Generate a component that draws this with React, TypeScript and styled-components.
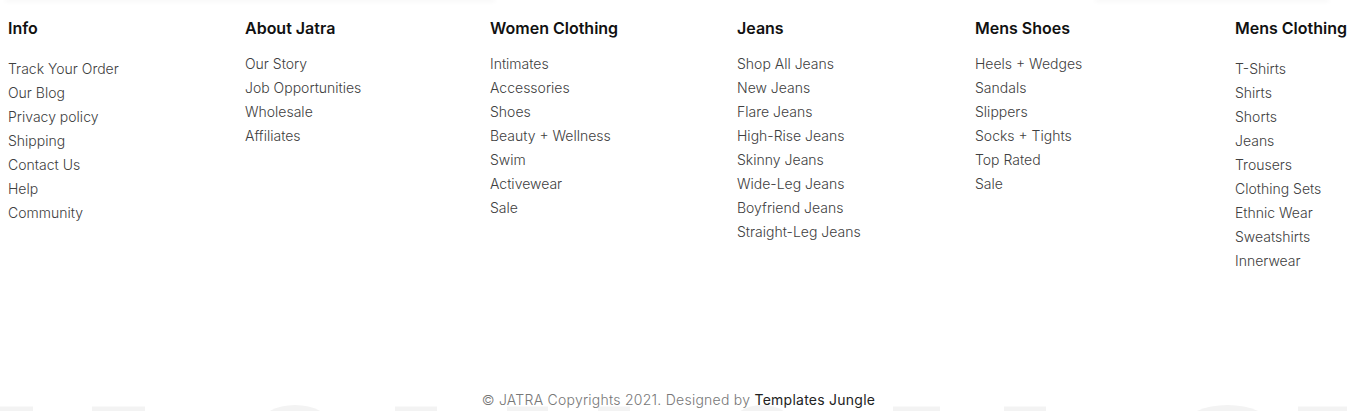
import React from "react";
import styled, { createGlobalStyle } from "styled-components";

const GlobalStyle = createGlobalStyle`
  html, body { margin: 0; padding: 0; background: #ffffff; }
  body { font-family: Inter, "Noto Sans", "Liberation Sans", sans-serif; overflow: hidden; }
`;

const Page = styled.div`
  height: 411px;
  display: flex;
  flex-direction: column;
  overflow: hidden;
`;

const TopEdge = styled.div`
  display: flex;
  height: 0;
`;

const EdgeCard = styled.div<{ $offset: number; $width: number }>`
  margin-left: ${(p) => p.$offset}px;
  width: ${(p) => p.$width}px;
  height: 0;
  box-shadow: 0 0 5px 1px rgba(0, 0, 0, 0.07);
`;

const Columns = styled.div`
  display: grid;
  grid-template-columns: 237px 245px 247px 238px 260px auto;
  padding: 18px 0 0 8px;
`;

const Column = styled.div`
  display: flex;
  flex-direction: column;
  white-space: nowrap;
`;

const Heading = styled.h3`
  margin: 0;
  font-size: 16px;
  line-height: 20px;
  font-weight: 600;
  color: #111111;
`;

const LinkList = styled.ul<{ $shift: boolean }>`
  list-style: none;
  margin: ${(p) => (p.$shift ? 19 : 14)}px 0 0;
  padding: 0;
`;

const LinkItem = styled.li`
  font-size: 14px;
  line-height: 24px;
  font-weight: 300;
  color: #404040;
`;

const Spacer = styled.div`
  flex: 1;
`;

const Copyright = styled.p`
  position: relative;
  z-index: 1;
  margin: 0 0 1px;
  padding-left: 10px;
  text-align: center;
  font-size: 14px;
  line-height: 22px;
  font-weight: 300;
  letter-spacing: 0.25px;
  color: #777777;
`;

const Credit = styled.span`
  color: #222222;
  font-weight: 400;
`;

const Watermark = styled.svg`
  display: block;
  width: 1347px;
  height: 6px;
  margin-top: -7px;
  flex-shrink: 0;
`;

type Col = { title: string; items: string[]; shift?: boolean };

const columns: Col[] = [
  {
    title: "Info",
    shift: true,
    items: ["Track Your Order", "Our Blog", "Privacy policy", "Shipping", "Contact Us", "Help", "Community"],
  },
  { title: "About Jatra", items: ["Our Story", "Job Opportunities", "Wholesale", "Affiliates"] },
  {
    title: "Women Clothing",
    items: ["Intimates", "Accessories", "Shoes", "Beauty + Wellness", "Swim", "Activewear", "Sale"],
  },
  {
    title: "Jeans",
    items: [
      "Shop All Jeans",
      "New Jeans",
      "Flare Jeans",
      "High-Rise Jeans",
      "Skinny Jeans",
      "Wide-Leg Jeans",
      "Boyfriend Jeans",
      "Straight-Leg Jeans",
    ],
  },
  {
    title: "Mens Shoes",
    items: ["Heels + Wedges", "Sandals", "Slippers", "Socks + Tights", "Top Rated", "Sale"],
  },
  {
    title: "Mens Clothing",
    shift: true,
    items: [
      "T-Shirts",
      "Shirts",
      "Shorts",
      "Jeans",
      "Trousers",
      "Clothing Sets",
      "Ethnic Wear",
      "Sweatshirts",
      "Innerwear",
    ],
  },
];

const blocks: [number, number][] = [
  [0, 33],
  [92, 145],
  [395, 437],
  [507, 548],
  [598, 630],
  [893, 940],
  [1004, 1046],
  [1298, 1347],
];

const arcs: [number, number][] = [
  [260, 330],
  [732, 792],
  [1185, 1270],
];

export default function App() {
  return (
    <Page>
      <GlobalStyle />
      <TopEdge>
        <EdgeCard $offset={6} $width={488} />
        <EdgeCard $offset={602} $width={232} />
      </TopEdge>
      <Columns>
        {columns.map((c) => (
          <Column key={c.title}>
            <Heading>{c.title}</Heading>
            <LinkList $shift={!!c.shift}>
              {c.items.map((i) => (
                <LinkItem key={i}>{i}</LinkItem>
              ))}
            </LinkList>
          </Column>
        ))}
      </Columns>
      <Spacer />
      <Copyright>
        © JATRA Copyrights 2021. Designed by <Credit>Templates Jungle</Credit>
      </Copyright>
      <Watermark viewBox="0 0 1347 6">
        {blocks.map(([a, b]) => (
          <rect key={a} x={a} y={1.5} width={b - a} height={5} fill="#f3f3f3" />
        ))}
        {arcs.map(([a, b]) => (
          <ellipse key={a} cx={(a + b) / 2} cy={20} rx={(b - a) / 2} ry={20} fill="#f3f3f3" />
        ))}
      </Watermark>
    </Page>
  );
}
